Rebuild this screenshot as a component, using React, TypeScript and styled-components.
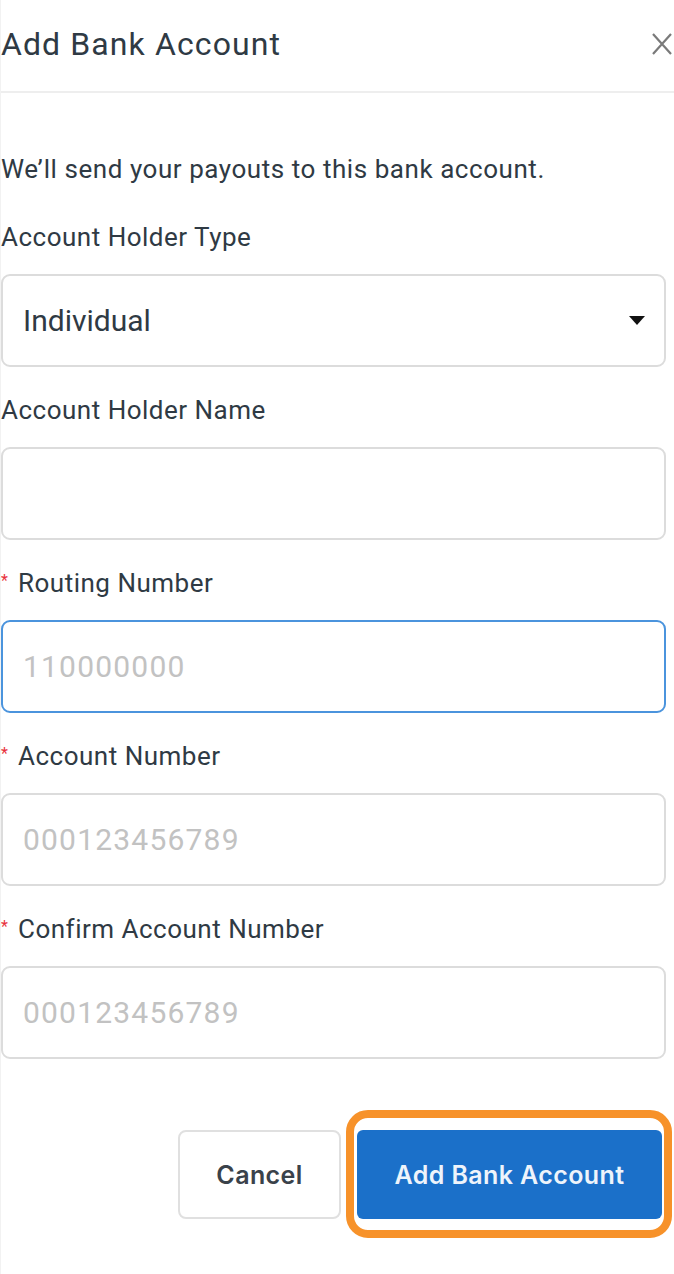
import styled, { createGlobalStyle } from 'styled-components';

const GlobalStyle = createGlobalStyle`
	html, body {
		margin: 0;
		padding: 0;
		background: #ffffff;
	}
	body {
		font-family: Roboto, 'Liberation Sans', sans-serif;
		color: #2f3a44;
	}
`;

const Modal = styled.div`
	width: 674px;
	min-height: 1274px;
	box-sizing: border-box;
	border-left: 1px solid #f2f2f2;
	display: flex;
	flex-direction: column;
`;

const Header = styled.div`
	height: 93px;
	box-sizing: border-box;
	display: flex;
	align-items: center;
	justify-content: space-between;
	border-bottom: 2px solid #eeeeee;
	padding-bottom: 4px;
`;

const Title = styled.h2`
	margin: 0;
	font-size: 32px;
	font-weight: 400;
	color: #2f3a44;
	letter-spacing: 1.1px;
`;

const CloseButton = styled.button`
	border: none;
	background: none;
	padding: 0;
	margin-right: 1px;
	width: 22px;
	height: 24px;
	display: flex;
	align-items: center;
	justify-content: center;
	cursor: pointer;
`;

const Body = styled.div`
	display: flex;
	flex-direction: column;
	padding: 59px 8px 0 0;
`;

const Intro = styled.p`
	margin: 0 0 34px;
	font-size: 26px;
	line-height: 34px;
	letter-spacing: 0.55px;
	color: #2f3a44;
`;

const Field = styled.div`
	display: flex;
	flex-direction: column;
	gap: 20px;
	margin-bottom: 26px;
`;

const Label = styled.label`
	display: flex;
	align-items: flex-start;
	font-size: 26px;
	line-height: 34px;
	letter-spacing: 0.5px;
	color: #2f3a44;
`;

const Required = styled.span`
	color: #e8323c;
	font-size: 16px;
	line-height: 20px;
	width: 17px;
	margin-top: 5px;
	letter-spacing: 0;
`;

const Control = styled.div<{ $focused?: boolean }>`
	height: 93px;
	box-sizing: border-box;
	border: 2px solid ${(p) => (p.$focused ? '#4b94dd' : '#dcdcdc')};
	border-radius: 9px;
	display: flex;
	align-items: center;
	justify-content: space-between;
	padding: 0 20px;
	font-size: 30px;
	color: #2f3a44;
`;

const Input = styled.input`
	border: none;
	outline: none;
	flex: 1;
	padding: 0;
	font-family: Roboto, 'Liberation Sans', sans-serif;
	font-size: 30px;
	letter-spacing: 1.2px;
	color: #2f3a44;
	background: transparent;
	&::placeholder {
		color: #c2c2c2;
	}
`;

const Caret = styled.span`
	width: 0;
	height: 0;
	border-left: 8px solid transparent;
	border-right: 8px solid transparent;
	border-top: 9px solid #111111;
	margin-right: -1px;
`;

const Actions = styled.div`
	display: flex;
	justify-content: flex-end;
	gap: 16px;
	margin-top: 45px;
	padding-right: 4px;
`;

const Button = styled.button<{ $primary?: boolean }>`
	height: 89px;
	box-sizing: border-box;
	border-radius: ${(p) => (p.$primary ? '6px' : '8px')};
	border: ${(p) => (p.$primary ? 'none' : '2px solid #e0e0e0')};
	background: ${(p) => (p.$primary ? '#1b70c9' : '#ffffff')};
	color: ${(p) => (p.$primary ? '#eef4fb' : '#3a424a')};
	font-family: Inter, Roboto, sans-serif;
	font-weight: 600;
	font-size: 25px;
	letter-spacing: 0.4px;
	width: ${(p) => (p.$primary ? '305px' : '163px')};
	cursor: pointer;
`;

const Highlight = styled.div`
	position: relative;
	&::after {
		content: '';
		position: absolute;
		top: -20px;
		bottom: -19px;
		left: -11px;
		right: -10px;
		border: 8px solid #f7922a;
		border-radius: 22px;
		pointer-events: none;
	}
`;

const fields = [
	{ label: 'Account Holder Name', placeholder: '', required: false, focused: false },
	{ label: 'Routing Number', placeholder: '110000000', required: true, focused: true },
	{ label: 'Account Number', placeholder: '000123456789', required: true, focused: false },
	{ label: 'Confirm Account Number', placeholder: '000123456789', required: true, focused: false },
];

const App = () => {
	return (
		<>
			<GlobalStyle />
			<Modal>
				<Header>
					<Title>Add Bank Account</Title>
					<CloseButton aria-label='Close'>
						<svg width='22' height='24' viewBox='0 0 22 24'>
							<path d='M2 2 L20 22 M20 2 L2 22' stroke='#7a7a7a' strokeWidth='2.2' fill='none' />
						</svg>
					</CloseButton>
				</Header>
				<Body>
					<Intro>We’ll send your payouts to this bank account.</Intro>
					<Field>
						<Label>Account Holder Type</Label>
						<Control>
							Individual
							<Caret />
						</Control>
					</Field>
					{fields.map((f, i) => (
						<Field key={i}>
							<Label>
								{f.required && <Required>*</Required>}
								{f.label}
							</Label>
							<Control $focused={f.focused}>
								<Input placeholder={f.placeholder} />
							</Control>
						</Field>
					))}
					<Actions>
						<Button>Cancel</Button>
						<Highlight>
							<Button $primary>Add Bank Account</Button>
						</Highlight>
					</Actions>
				</Body>
			</Modal>
		</>
	);
};

export default App;
